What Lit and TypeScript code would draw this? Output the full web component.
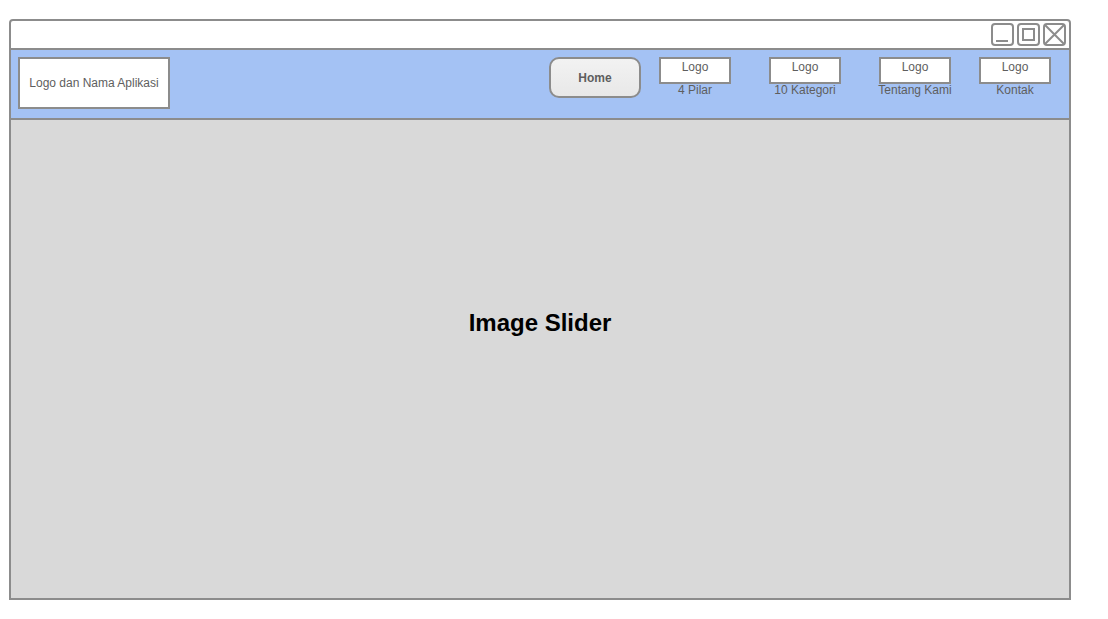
import { LitElement, html, css, svg } from "lit";
import { customElement } from "lit/decorators.js";

interface NavItem {
  label: string;
  spacing: string;
}

const NAV_ITEMS: NavItem[] = [
  { label: "4 Pilar", spacing: "" },
  { label: "10 Kategori", spacing: "wide" },
  { label: "Tentang Kami", spacing: "wide" },
  { label: "Kontak", spacing: "medium" },
];

const WINDOW_CONTROLS = [
  { name: "Minimize", glyph: svg`<path d="M5 18H17" />` },
  { name: "Maximize", glyph: svg`<rect x="6" y="6" width="11" height="11" />` },
  { name: "Close", glyph: svg`<path d="M2 2L21 21M21 2L2 21" />` },
];

@customElement("app-root")
export class AppRoot extends LitElement {
  static styles = css`
    :host {
      display: flex;
      box-sizing: border-box;
      min-height: 100vh;
      padding: 19px 37px 19px 9px;
      background: #ffffff;
      color: #5e5e5e;
      font-family: "Liberation Sans", Arial, sans-serif;
      font-size: 12px;
      line-height: 14px;
    }
    * {
      box-sizing: border-box;
    }
    .window {
      flex: 1;
      display: flex;
      flex-direction: column;
      border: 2px solid #8c8c8c;
      border-radius: 4px 4px 0 0;
    }
    .titlebar {
      display: flex;
      justify-content: flex-end;
      gap: 3px;
      padding: 2px 3px;
      border-bottom: 2px solid #8c8c8c;
    }
    .control {
      display: block;
      padding: 0;
      border: 0;
      background: none;
    }
    .icon {
      display: block;
      width: 23px;
      height: 23px;
      fill: none;
      stroke: #8c8c8c;
      stroke-width: 2;
    }
    .header {
      display: flex;
      justify-content: space-between;
      align-items: flex-start;
      min-height: 70px;
      padding: 7px 18px 7px 7px;
      border-bottom: 2px solid #8c8c8c;
      background: #a4c2f4;
    }
    .brand {
      display: flex;
      align-items: center;
      justify-content: center;
      width: 152px;
      height: 52px;
      border: 2px solid #8c8c8c;
      background: #ffffff;
      color: inherit;
      text-decoration: none;
      white-space: nowrap;
    }
    .nav {
      display: flex;
      align-items: flex-start;
      gap: 18px;
    }
    .home {
      width: 92px;
      height: 41px;
      padding: 0;
      border: 2px solid #8c8c8c;
      border-radius: 10px;
      background: linear-gradient(#f2f2f2, #e8e8e8);
      color: inherit;
      font: inherit;
      font-weight: bold;
    }
    .item {
      display: flex;
      flex-direction: column;
      align-items: center;
      width: 72px;
      color: inherit;
      line-height: 12px;
      text-decoration: none;
      white-space: nowrap;
    }
    .wide {
      margin-left: 20px;
    }
    .medium {
      margin-left: 10px;
    }
    .logo {
      width: 100%;
      height: 27px;
      padding-top: 2px;
      border: 2px solid #8c8c8c;
      background: #ffffff;
      text-align: center;
    }
    .slider {
      flex: 1;
      display: flex;
      align-items: center;
      justify-content: center;
      padding-bottom: 72px;
      background: #d9d9d9;
    }
    .title {
      margin: 0;
      color: #000000;
      font-size: 24px;
      line-height: 28px;
    }
  `;

  render() {
    return html`
      <div class="window">
        <div class="titlebar">
          ${WINDOW_CONTROLS.map(
            (control) => html`
              <button class="control" type="button" aria-label=${control.name}>
                <svg class="icon" viewBox="0 0 23 23" aria-hidden="true">
                  <rect x="1" y="1" width="21" height="21" rx="3" />
                  ${control.glyph}
                </svg>
              </button>
            `
          )}
        </div>
        <header class="header">
          <a class="brand" href="#">Logo dan Nama Aplikasi</a>
          <nav class="nav">
            <button class="home" type="button">Home</button>
            ${NAV_ITEMS.map(
              (item) => html`
                <a class="item ${item.spacing}" href="#">
                  <span class="logo">Logo</span>
                  <span>${item.label}</span>
                </a>
              `
            )}
          </nav>
        </header>
        <main class="slider">
          <h1 class="title">Image Slider</h1>
        </main>
      </div>
    `;
  }
}
